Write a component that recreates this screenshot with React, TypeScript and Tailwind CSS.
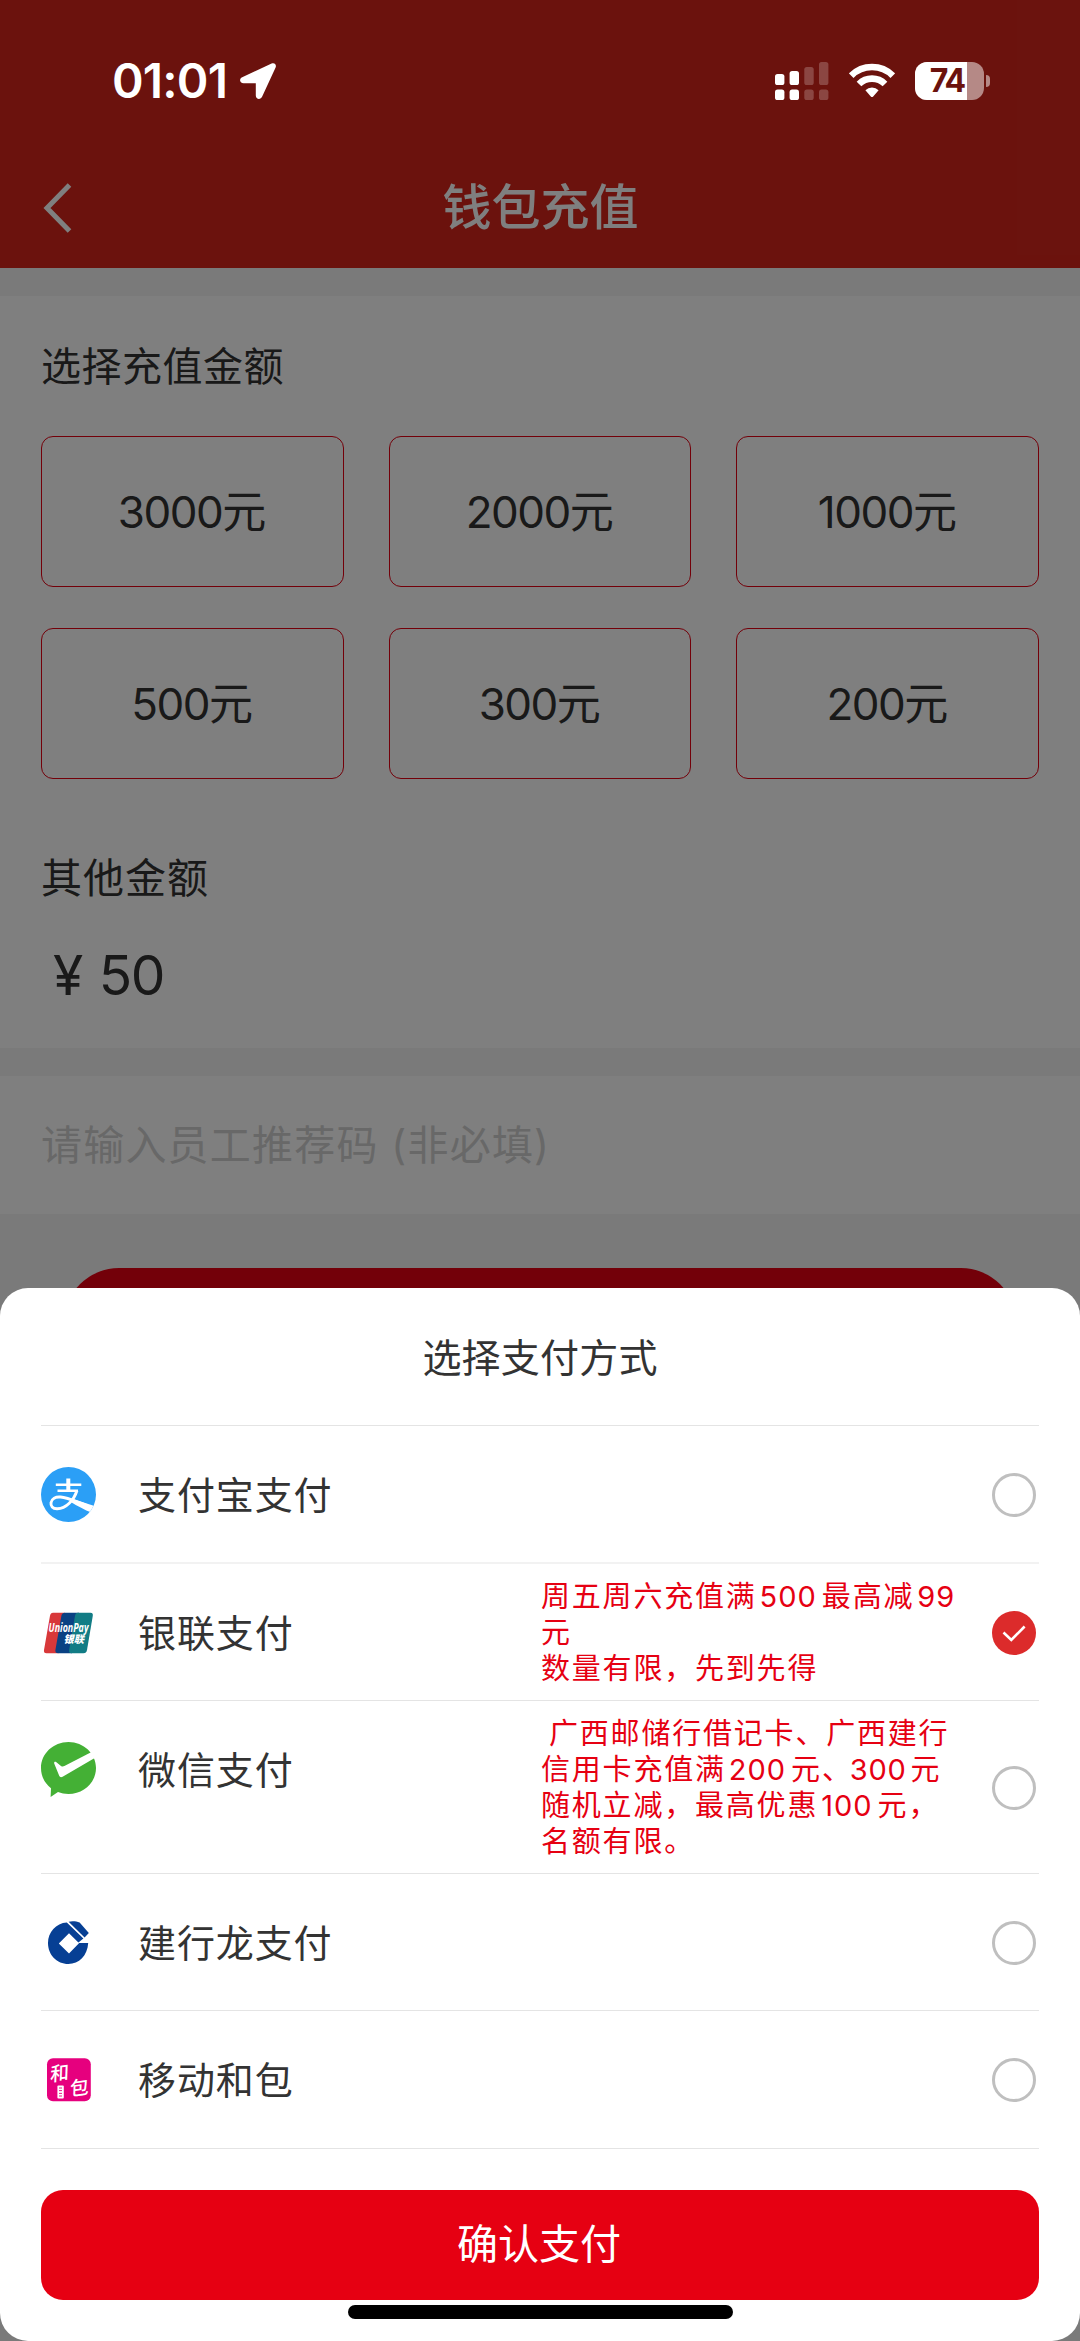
import { useState, type ReactNode } from 'react';
import clsx from 'clsx';

type MethodId = 'alipay' | 'unionpay' | 'wechat' | 'ccb' | 'hebao';

type Method = {
  id: MethodId;
  label: string;
  icon: ReactNode;
  rowClass: string;
  promo?: ReactNode;
};

const AMOUNTS = [3000, 2000, 1000, 500, 300, 200];

function AlipayIcon() {
  return (
    <svg viewBox="0 0 55 55" className="size-[55px]">
      <defs>
        <clipPath id="alipay-circle">
          <circle cx="27.5" cy="27.5" r="27.5" />
        </clipPath>
      </defs>
      <g clipPath="url(#alipay-circle)">
        <rect width="55" height="55" fill="#2b9ff6" />
        <g fill="none" stroke="#fff">
          <path d="M14.8 17.8H40.3M16.5 23.8H37" strokeWidth="2.5" />
          <path d="M27.3 11.6v12.4" strokeWidth="4" />
          <path d="M36 23.5C33 33 25 42 16 41.8C11.5 41.6 9.6 39 10 35.8C10.6 31.6 14.6 29.6 19.5 30C27 30.6 36 35 46 38.5" strokeWidth="2.9" />
        </g>
        <path d="M31 31.8L55 39.5V42L50.5 45.6C43.5 42.6 37 39.4 29 34.4Z" fill="#fff" />
      </g>
    </svg>
  );
}

function UnionPayIcon() {
  return (
    <svg viewBox="0 0 55 55" className="size-[55px] overflow-visible">
      <path d="M12 7.8H24L17.5 48.2H5.5C3.5 48.2 2.6 46.9 3 44.9L9 10.8C9.4 8.8 10.4 7.8 12 7.8Z" fill="#d8383a" />
      <path d="M24 7.8H38L31 48.2H17.5C15 48.2 14 46.9 14.4 44.9L20.4 10.8C20.8 8.8 22 7.8 24 7.8Z" fill="#0a4183" />
      <path d="M37 7.8H49.5C51.3 7.8 52.1 9 51.8 10.8L46 44.9C45.6 47 44.4 48.2 42.5 48.2H30.5C28.5 48.2 27.8 46.9 28.1 44.9L34 10.8C34.4 8.8 35.3 7.8 37 7.8Z" fill="#127c85" />
      <text x="7.5" y="27" textLength="40" lengthAdjust="spacingAndGlyphs" fill="#fff" className="font-['Open_Sans',sans-serif] text-[12.5px] font-bold italic">UnionPay</text>
      <text x="22.5" y="38" textLength="20.5" lengthAdjust="spacingAndGlyphs" fill="#fff" className="font-['Noto_Sans_CJK_SC',sans-serif] text-[10.5px] font-black italic">银联</text>
    </svg>
  );
}

function WechatIcon() {
  return (
    <svg viewBox="0 0 55 55" className="size-[55px]">
      <path d="M27.5 0C42.7 0 55 11.6 55 26S42.7 52 27.5 52C23.7 52 20.2 51.4 17 50.1L9.6 54.9L10 46.2C3.8 41.5 0 34.2 0 26C0 11.6 12.3 0 27.5 0Z" fill="#44b035" />
      <path d="M13.2 21.6C12.8 19.8 14 19.3 15.4 20.2L20 23.9C21 24.7 22 24.8 23.4 24.1L49.6 10.4L56 13L55 15.2L21.6 34.8C20 35.7 18.8 35.2 18.2 33.8Z" fill="#fff" />
    </svg>
  );
}

function CcbIcon() {
  return (
    <svg viewBox="0 0 55 55" className="size-[55px]">
      <path d="M25.8 7.4C15 8 7 17 7 28C7 40 16 49 27.3 49C38 49 46.5 40.5 47.2 28H38.2L28 38.5L17.8 28.5L28 18.2L37.4 27.4L42.4 23.6Z" fill="#063f94" />
      <path d="M27.6 6.8C31 5.8 35.4 6.2 38.6 7.6L47.8 18L43.6 22.4Z" fill="#063f94" />
    </svg>
  );
}

function HebaoIcon() {
  return (
    <svg viewBox="0 0 55 55" className="size-[55px]">
      <rect x="6" y="6.2" width="43.8" height="43" rx="6" fill="#e6007e" />
      <g fill="#fff" className="font-['Noto_Sans_CJK_SC',sans-serif] font-medium">
        <text transform="translate(9 29.6) rotate(-8) skewX(-10)" className="text-[19px]">和</text>
        <text transform="translate(28.8 44) rotate(-8) skewX(-10)" className="text-[19px]">包</text>
      </g>
      <rect x="16.4" y="33.6" width="6.4" height="13" rx="1" fill="#fff" />
      <path d="M18 36h3M18 38.6h3M18 41.4h3M18 44h3" stroke="#e6007e" strokeWidth="0.9" />
    </svg>
  );
}

const METHODS: Method[] = [
  { id: 'alipay', label: '支付宝支付', icon: <AlipayIcon />, rowClass: 'h-[138px] border-b-2 border-[#f2f2f2]' },
  {
    id: 'unionpay',
    label: '银联支付',
    icon: <UnionPayIcon />,
    rowClass: 'h-[137px] border-b border-[#e4e4e4]',
    promo: (
      <>
        <p>周五周六充值满<Num>500</Num>最高减<Num>99</Num></p>
        <p>元</p>
        <p>数量有限，先到先得</p>
      </>
    ),
  },
  {
    id: 'wechat',
    label: '微信支付',
    icon: <WechatIcon />,
    rowClass: 'h-[173px] border-b border-[#e4e4e4]',
    promo: (
      <>
        <p className="pl-2">广西邮储行借记卡、广西建行</p>
        <p>信用卡充值满<Num>200</Num>元、<span className="mr-1 -ml-[3px] tracking-[0.8px]">300</span>元</p>
        <p>随机立减，最高优惠<Num>100</Num>元，</p>
        <p>名额有限。</p>
      </>
    ),
  },
  { id: 'ccb', label: '建行龙支付', icon: <CcbIcon />, rowClass: 'h-[137px] border-b border-[#e4e4e4]' },
  { id: 'hebao', label: '移动和包', icon: <HebaoIcon />, rowClass: 'h-[138px] border-b border-[#e4e4e4]' },
];

function Num({ children }: { children: ReactNode }) {
  return <span className="mr-[5px] ml-[3px] tracking-[1px]">{children}</span>;
}

function Radio({ checked }: { checked: boolean }) {
  if (!checked) {
    return <span className="size-11 rounded-full border-[3px] border-[#bfbfbf]" />;
  }
  return (
    <span className="flex size-11 items-center justify-center rounded-full bg-[#dc2b2b]">
      <svg viewBox="0 0 44 44" className="size-11" fill="none" stroke="#fff" strokeWidth="2.6">
        <path d="M11.5 21.5L19.3 29L32.6 15.5" />
      </svg>
    </span>
  );
}

function StatusBar() {
  return (
    <div className="absolute inset-x-0 top-0 z-20 flex h-[161px] items-center justify-between pr-[90px] pl-[112px] text-white">
      <div className="flex items-center gap-[13px]">
        <span className="text-[48px] leading-none font-semibold tracking-[-0.8px]">01:01</span>
        <svg viewBox="0 0 36 36" className="size-9" fill="currentColor">
          <path d="M2.2 14.2L31.6 0.5C34.4 -0.7 36.8 1.5 35.6 4.4L22.2 33.6C20.6 37.2 15.8 36.4 15.8 32.4V20.2H3.6C-0.4 20.2 -1.2 15.8 2.2 14.2Z" />
        </svg>
      </div>
      <div className="flex items-center">
        <svg viewBox="0 0 54 38" className="mr-5 h-[38px] w-[54px]" fill="currentColor">
          <rect x="0" y="12" width="9.4" height="11" rx="2.6" />
          <rect x="14.6" y="9" width="9.4" height="14" rx="2.6" />
          <rect x="0" y="27.6" width="9.4" height="10.4" rx="2.6" />
          <rect x="14.6" y="27.6" width="9.4" height="10.4" rx="2.6" />
          <g opacity="0.22">
            <rect x="29.3" y="5" width="9.4" height="18" rx="2.6" />
            <rect x="44" y="0" width="9.4" height="23" rx="2.6" />
            <rect x="29.3" y="27.6" width="9.4" height="10.4" rx="2.6" />
            <rect x="44" y="27.6" width="9.4" height="10.4" rx="2.6" />
          </g>
        </svg>
        <svg viewBox="0 0 46 35" className="mr-5 h-[35px] w-[46px]">
          <g fill="none" stroke="#fff" strokeWidth="6.6">
            <path d="M2.2 12.6A29.5 29.5 0 0 1 43.8 12.6" />
            <path d="M10 21A18.4 18.4 0 0 1 36 21" />
          </g>
          <path d="M16.4 27.2A9.4 9.4 0 0 1 29.6 27.2L24.2 33.4Q23 34.8 21.8 33.4Z" fill="#fff" />
        </svg>
        <div className="relative flex h-[38px] w-[69px] items-center overflow-hidden rounded-[12px] bg-white/50">
          <div className="absolute inset-y-0 left-0 w-[52px] bg-white" />
          <span className="relative w-full pr-[5px] text-center text-[32px] leading-none font-bold tracking-[-2px] text-[#6b120d]">74</span>
        </div>
        <div className="ml-[2px] h-3 w-1 rounded-r-full bg-white/50" />
      </div>
    </div>
  );
}

function RechargePage() {
  return (
    <div className="h-full bg-[#f4f4f4] text-[#333333]">
      <header className="grid h-[268px] grid-cols-[1fr_auto_1fr] bg-[#d6251b] px-[41px] pt-[146px] text-white">
        <svg viewBox="0 0 34 50" className="mt-[37px] h-[50px] w-[34px]" fill="none" stroke="currentColor" strokeWidth="5">
          <path d="M28.5 2L6 25L28.5 48" />
        </svg>
        <h1 className="pt-[37px] pl-px text-[49px] leading-[50px] font-medium">钱包充值</h1>
      </header>

      <section className="mt-7 h-[752px] bg-white px-[41px]">
        <h2 className="pt-[41px] text-[40px] leading-[60px] tracking-[0.5px]">选择充值金额</h2>
        <div className="mt-[39px] grid grid-cols-3 gap-x-[45px] gap-y-[41px]">
          {AMOUNTS.map((amount) => (
            <button key={amount} className="h-[151px] rounded-xl border border-[#e60012] pt-px pr-[2px] text-[44px] tracking-[-1.5px]">
              {amount}元
            </button>
          ))}
        </div>
        <h2 className="mt-[69px] text-[41px] leading-[60px] tracking-[1px]">其他金额</h2>
        <p className="mt-[32px] pl-3 text-[55px] leading-[70px] tracking-[-1.5px] [word-spacing:3px]">¥ 50</p>
      </section>

      <section className="mt-7 flex h-[138px] items-center bg-white px-[41px] pt-[2px] text-[41px] tracking-[1.2px] whitespace-pre text-[#d0d0d0]">
        请输入员工推荐码 (非必填)
      </section>

      <div className="mx-[64px] mt-[54px] h-[110px] rounded-full bg-[#e60012]" />
    </div>
  );
}

function PaymentSheet() {
  const [selected, setSelected] = useState<MethodId>('unionpay');

  return (
    <div className="absolute inset-x-0 bottom-0 z-10 h-[1053px] rounded-[28px] bg-white px-[41px] text-[#333333]">
      <h2 className="h-[138px] border-b border-[#e4e4e4] text-center text-[39px] leading-[140px] tracking-[0.2px]">选择支付方式</h2>
      {METHODS.map((method) => (
        <div
          key={method.id}
          onClick={() => setSelected(method.id)}
          className={clsx('flex items-center pr-[3px]', method.rowClass)}
        >
          <div className="flex h-[137px] items-center gap-[42px] self-start">
            {method.icon}
            <span className="w-[400px] pt-px text-[38px] tracking-[0.9px]">{method.label}</span>
          </div>
          <div className="w-[448px] pt-px pl-[3px] text-[29px] leading-[36px] tracking-[1.8px] whitespace-nowrap text-[#e60012]">
            {method.promo}
          </div>
          <div className="ml-auto flex pt-px">
            <Radio checked={selected === method.id} />
          </div>
        </div>
      ))}
      <button className="mt-[41px] h-[110px] w-full rounded-[22px] bg-[#e60012] pr-[2px] text-[41px] text-white">确认支付</button>
      <div className="mx-auto mt-[5px] h-[14px] w-[385px] rounded-full bg-black" />
    </div>
  );
}

function App() {
  return (
    <div className="relative h-[2341px] w-[1080px] overflow-hidden font-['Inter','Noto_Sans_CJK_SC',sans-serif]">
      <RechargePage />
      {/* Dimmed backdrop */}
      <div className="absolute inset-0 bg-black/50" />
      <StatusBar />
      <PaymentSheet />
    </div>
  );
}

export default App;
